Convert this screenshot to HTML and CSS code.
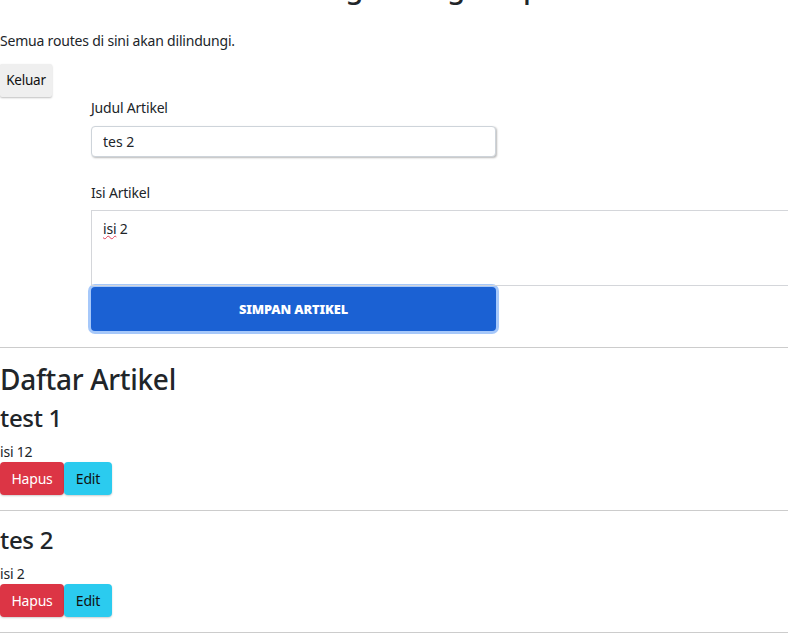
FILE: index.html
```html
<!DOCTYPE html>
<html lang="id">
<head>
<meta charset="utf-8">
<title>Artikel</title>
<link rel="stylesheet" href="styles.css">
</head>
<body>
<main class="page">
  <h1 class="title">Selamat datang di Blog Simple</h1>
  <p class="intro">Semua routes di sini akan dilindungi.</p>
  <div class="logout-row"><button class="btn-logout" type="button">Keluar</button></div>
  <form class="article-form">
    <div class="field">
      <label class="field-label" for="judul">Judul Artikel</label>
      <input class="field-input" id="judul" type="text" value="tes 2">
    </div>
    <div class="field field-last">
      <label class="field-label" id="isi-label">Isi Artikel</label>
      <div class="field-textarea" role="textbox" aria-multiline="true" aria-labelledby="isi-label" contenteditable="true" spellcheck="false"><span class="misspelled">isi</span> 2</div>
    </div>
    <button class="btn-save" type="button">SIMPAN ARTIKEL</button>
  </form>
  <hr class="divider">
  <h2 class="list-title">Daftar Artikel</h2>
  <section class="article">
    <h3 class="article-title">test 1</h3>
    <p class="article-body">isi 12</p>
    <div class="actions">
      <button class="btn btn-danger" type="button">Hapus</button>
      <button class="btn btn-info" type="button">Edit</button>
    </div>
  </section>
  <hr class="divider">
  <section class="article">
    <h3 class="article-title">tes 2</h3>
    <p class="article-body">isi 2</p>
    <div class="actions">
      <button class="btn btn-danger" type="button">Hapus</button>
      <button class="btn btn-info" type="button">Edit</button>
    </div>
  </section>
  <hr class="divider">
</main>
</body>
</html>
```

FILE: styles.css
```css
html, body {
  margin: 0;
  padding: 0;
  background: #ffffff;
  overflow-x: hidden;
}

body {
  font-family: "Noto Sans", "Open Sans", sans-serif;
  font-size: 14px;
  line-height: 21px;
  color: #212529;
  letter-spacing: -0.2px;
}

.page {
  display: block;
}

.title {
  margin: -30px 0 25px 0;
  padding-left: 148px;
  font-size: 29px;
  line-height: 1.2;
  font-weight: 500;
  white-space: nowrap;
}

.intro {
  margin: 0 0 13px 0;
}

.logout-row {
  display: flex;
}

.btn-logout {
  font-family: "Noto Sans", sans-serif;
  font-size: 13.5px;
  letter-spacing: -0.2px;
  color: #111;
  background: #efefef;
  border: none;
  border-radius: 2px;
  height: 33px;
  width: 52px;
  padding: 0;
  box-shadow: 0 1px 2px rgba(0, 0, 0, 0.25);
}

.article-form {
  margin-left: 91px;
  width: 405px;
}

.field {
  display: flex;
  flex-direction: column;
  margin-bottom: 25px;
}

.field-last {
  margin-bottom: 1px;
}

.field-label {
  line-height: 21px;
  margin-bottom: 8px;
}

.field-input {
  box-sizing: border-box;
  width: 405px;
  height: 31px;
  border: 1px solid #ced4da;
  border-radius: 4px;
  padding: 0 11px;
  font-family: "Noto Sans", sans-serif;
  font-size: 14px;
  color: #212529;
  box-shadow: 1px 1px 2px rgba(0, 0, 0, 0.28);
}

.field-last .field-label {
  margin-bottom: 7px;
}

.field-textarea {
  box-sizing: border-box;
  width: 760px;
  height: 76px;
  border: 1px solid #d4d6da;
  border-right: none;
  padding: 7px 11px;
  font-size: 14px;
  line-height: 21px;
  color: #212529;
  outline: none;
}

.misspelled {
  text-decoration: underline wavy #e0405a;
  text-decoration-thickness: 1px;
  text-decoration-skip-ink: none;
}

.btn-save {
  display: block;
  width: 405px;
  height: 44px;
  margin: 0 0 16px 0;
  border: none;
  border-radius: 4px;
  background: #1b61d3;
  color: #ffffff;
  font-family: "Noto Sans", sans-serif;
  font-size: 12.8px;
  font-weight: 900;
  letter-spacing: -0.1px;
  box-shadow: 0 0 0 3px #a6c8fa;
}

.divider {
  margin: 0 0 15px 0;
  border: none;
  border-top: 1px solid #cccccc;
  height: 0;
}

.list-title {
  margin: 0 0 8px 0;
  font-size: 28px;
  line-height: 1.2;
  font-weight: 500;
  letter-spacing: -0.3px;
}

.article {
  display: flex;
  flex-direction: column;
  align-items: flex-start;
  margin-bottom: 15px;
}

.article-title {
  margin: 0 0 8px 0;
  font-size: 24px;
  line-height: 1.2;
  font-weight: 500;
  letter-spacing: -0.3px;
}

.article-body {
  margin: 0;
}

.actions {
  display: flex;
}

.btn {
  height: 33px;
  border: none;
  border-radius: 4px;
  padding: 0;
  font-family: "Noto Sans", sans-serif;
  font-size: 14px;
  letter-spacing: -0.2px;
  box-shadow: 0 1px 2px rgba(0, 0, 0, 0.2);
}

.btn-danger {
  background: #dc3545;
  color: #ffffff;
  width: 64px;
}

.btn-info {
  background: #2bcbef;
  color: #111111;
  width: 48px;
}
```
